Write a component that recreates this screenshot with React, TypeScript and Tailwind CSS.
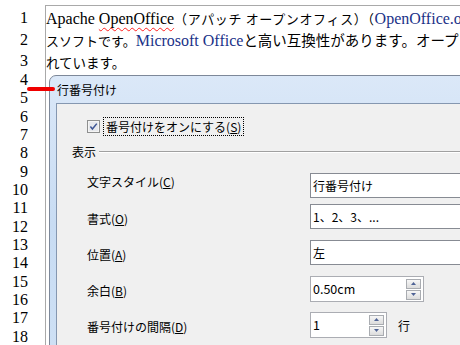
import React from "react";

const nums = Array.from({ length: 18 }, (_, i) => i + 1);

function Spin() {
  return (
    <div className="flex flex-col gap-[1px]">
      <div className="w-[15px] h-[10px] border border-[#a9acb1] bg-gradient-to-b from-[#f7f7f7] to-[#dcdcdc] flex items-center justify-center">
        <svg width="5" height="3" viewBox="0 0 5 3">
          <path d="M2.5 0 L5 3 L0 3 Z" fill="#4f6396" />
        </svg>
      </div>
      <div className="w-[15px] h-[10px] border border-[#a9acb1] bg-gradient-to-b from-[#f7f7f7] to-[#dcdcdc] flex items-center justify-center">
        <svg width="5" height="3" viewBox="0 0 5 3">
          <path d="M0 0 L5 0 L2.5 3 Z" fill="#4f6396" />
        </svg>
      </div>
    </div>
  );
}

export default function App() {
  return (
    <div className="relative w-[460px] h-[345px] overflow-hidden bg-white">
      <div className="flex h-full">
        {/* gutter */}
        <div className="w-[45px] shrink-0 pt-[7px] pr-[17px] flex flex-col items-end font-['Liberation_Serif',serif] text-[16px] text-black">
          {nums.map((n) => (
            <div
              key={n}
              className={
                n <= 2
                  ? "h-[22px] leading-[22px]"
                  : n === 3
                  ? "h-[20px] leading-[20px]"
                  : "h-[18.35px] leading-[18.35px]"
              }
            >
              {n}
            </div>
          ))}
        </div>
        {/* page */}
        <div className="flex-1 mt-[5px] pt-[1px] border-l border-t border-[#a9a9a9] overflow-hidden whitespace-nowrap text-black">
          <div className="h-[22px] leading-[22px]">
            <span className="font-['Liberation_Serif',serif] text-[16px]">Apache </span>
            <span className="font-['Liberation_Serif',serif] text-[16px] underline decoration-wavy decoration-[#ff2020] decoration-1 underline-offset-[3px]">
              OpenOffice
            </span>
            <span className="font-['Noto_Sans_CJK_JP',sans-serif] text-[13px] tracking-[0.65px]">（アパッチ オープンオフィス）（</span>
            <span className="font-['Liberation_Serif',serif] text-[16px] text-[#1a3288]">OpenOffice.org</span>
          </div>
          <div className="h-[22px] leading-[22px]">
            <span className="font-['Noto_Sans_CJK_JP',sans-serif] text-[13px]">スソフトです。</span>
            <span className="font-['Liberation_Serif',serif] text-[16px] text-[#1a3288]">Microsoft Office</span>
            <span className="font-['Noto_Sans_CJK_JP',sans-serif] text-[14.5px]">と高い互換性があります。オープン</span>
          </div>
          <div className="h-[22px] leading-[22px]">
            <span className="font-['Noto_Sans_CJK_JP',sans-serif] text-[13.5px]">れています。</span>
          </div>
        </div>
      </div>

      {/* dialog window */}
      <div className="absolute left-[49px] top-[75px] w-[460px] h-[300px] border border-[#7d8899] rounded-tl-[7px] bg-gradient-to-b from-[#dbe8f8] via-[#c8dcf3] to-[#cfe1f5] flex flex-col font-['Noto_Sans_CJK_JP',sans-serif] text-[12px] text-black">
        <div className="h-[27px] shrink-0 flex items-center pl-[7px]">行番号付け</div>
        <div className="flex-1 flex pl-[6px]">
          <div className="flex-1 bg-[#f0f0f0] border-l border-t border-[#8597b0] flex flex-col">
            {/* checkbox */}
            <div className="mt-[13px] h-[19px] flex items-center pl-[30px]">
              <svg width="13" height="13" viewBox="0 0 13 13">
                <rect x="0.5" y="0.5" width="12" height="12" fill="#f4f4f4" stroke="#8e8f8f" />
                <rect x="2" y="2" width="9" height="9" fill="#e6e8ec" />
                <path d="M3.4 6.6 L5.4 9 L9.8 3.6" fill="none" stroke="#3d5594" strokeWidth="1.5" />
              </svg>
              <div className="ml-[3px] h-[19px] px-[2px] flex items-center border border-dotted border-black leading-[17px]">
                番号付けをオンにする(<span className="underline">S</span>)
              </div>
            </div>
            {/* group header */}
            <div className="mt-[8px] h-[16px] flex items-center pl-[15px]">
              <span className="leading-[16px]">表示</span>
              <div className="flex-1 ml-[3px] h-[2px] border-t border-b border-t-[#a0a0a0] border-b-white" />
            </div>
            {/* row 1 */}
            <div className="mt-[13px] h-[25px] flex">
              <div className="w-[253px] pl-[30px] leading-[17px]">
                文字スタイル(<span className="underline">C</span>)
              </div>
              <div className="flex-1 h-[25px] border border-[#878b93] bg-white flex items-center pl-[2px]">行番号付け</div>
            </div>
            {/* row 2 */}
            <div className="mt-[6px] h-[25px] flex">
              <div className="w-[253px] pl-[30px] pt-[6px] leading-[17px]">
                書式(<span className="underline">O</span>)
              </div>
              <div className="flex-1 h-[25px] border border-[#878b93] bg-white flex items-center pl-[2px]">1、2、3、...</div>
            </div>
            {/* row 3 */}
            <div className="mt-[11px] h-[25px] flex">
              <div className="w-[253px] pl-[30px] pt-[6px] leading-[17px]">
                位置(<span className="underline">A</span>)
              </div>
              <div className="flex-1 h-[25px] border border-[#878b93] bg-white flex items-center pl-[2px]">左</div>
            </div>
            {/* row 4 */}
            <div className="mt-[11px] h-[26px] flex">
              <div className="w-[253px] pl-[30px] pt-[6px] leading-[17px]">
                余白(<span className="underline">B</span>)
              </div>
              <div className="w-[114px] h-[26px] border border-[#abadb3] bg-white flex items-center justify-between pl-[2px] pr-[2px]">
                <span className="text-[12.5px]">0.50cm</span>
                <Spin />
              </div>
            </div>
            {/* row 5 */}
            <div className="mt-[10px] h-[26px] flex items-start">
              <div className="w-[253px] pl-[30px] pt-[6px] leading-[17px]">
                番号付けの間隔(<span className="underline">D</span>)
              </div>
              <div className="w-[77px] h-[26px] border border-[#abadb3] bg-white flex items-center justify-between pl-[2px] pr-[2px]">
                <span className="text-[12.5px]">1</span>
                <Spin />
              </div>
              <div className="ml-[11px] pt-[5px] leading-[17px]">行</div>
            </div>
          </div>
        </div>
      </div>

      {/* red marker */}
      <div className="absolute left-[27px] top-[87px] w-[28px] h-[4px] rounded-full bg-[#f00000]" />
    </div>
  );
}
